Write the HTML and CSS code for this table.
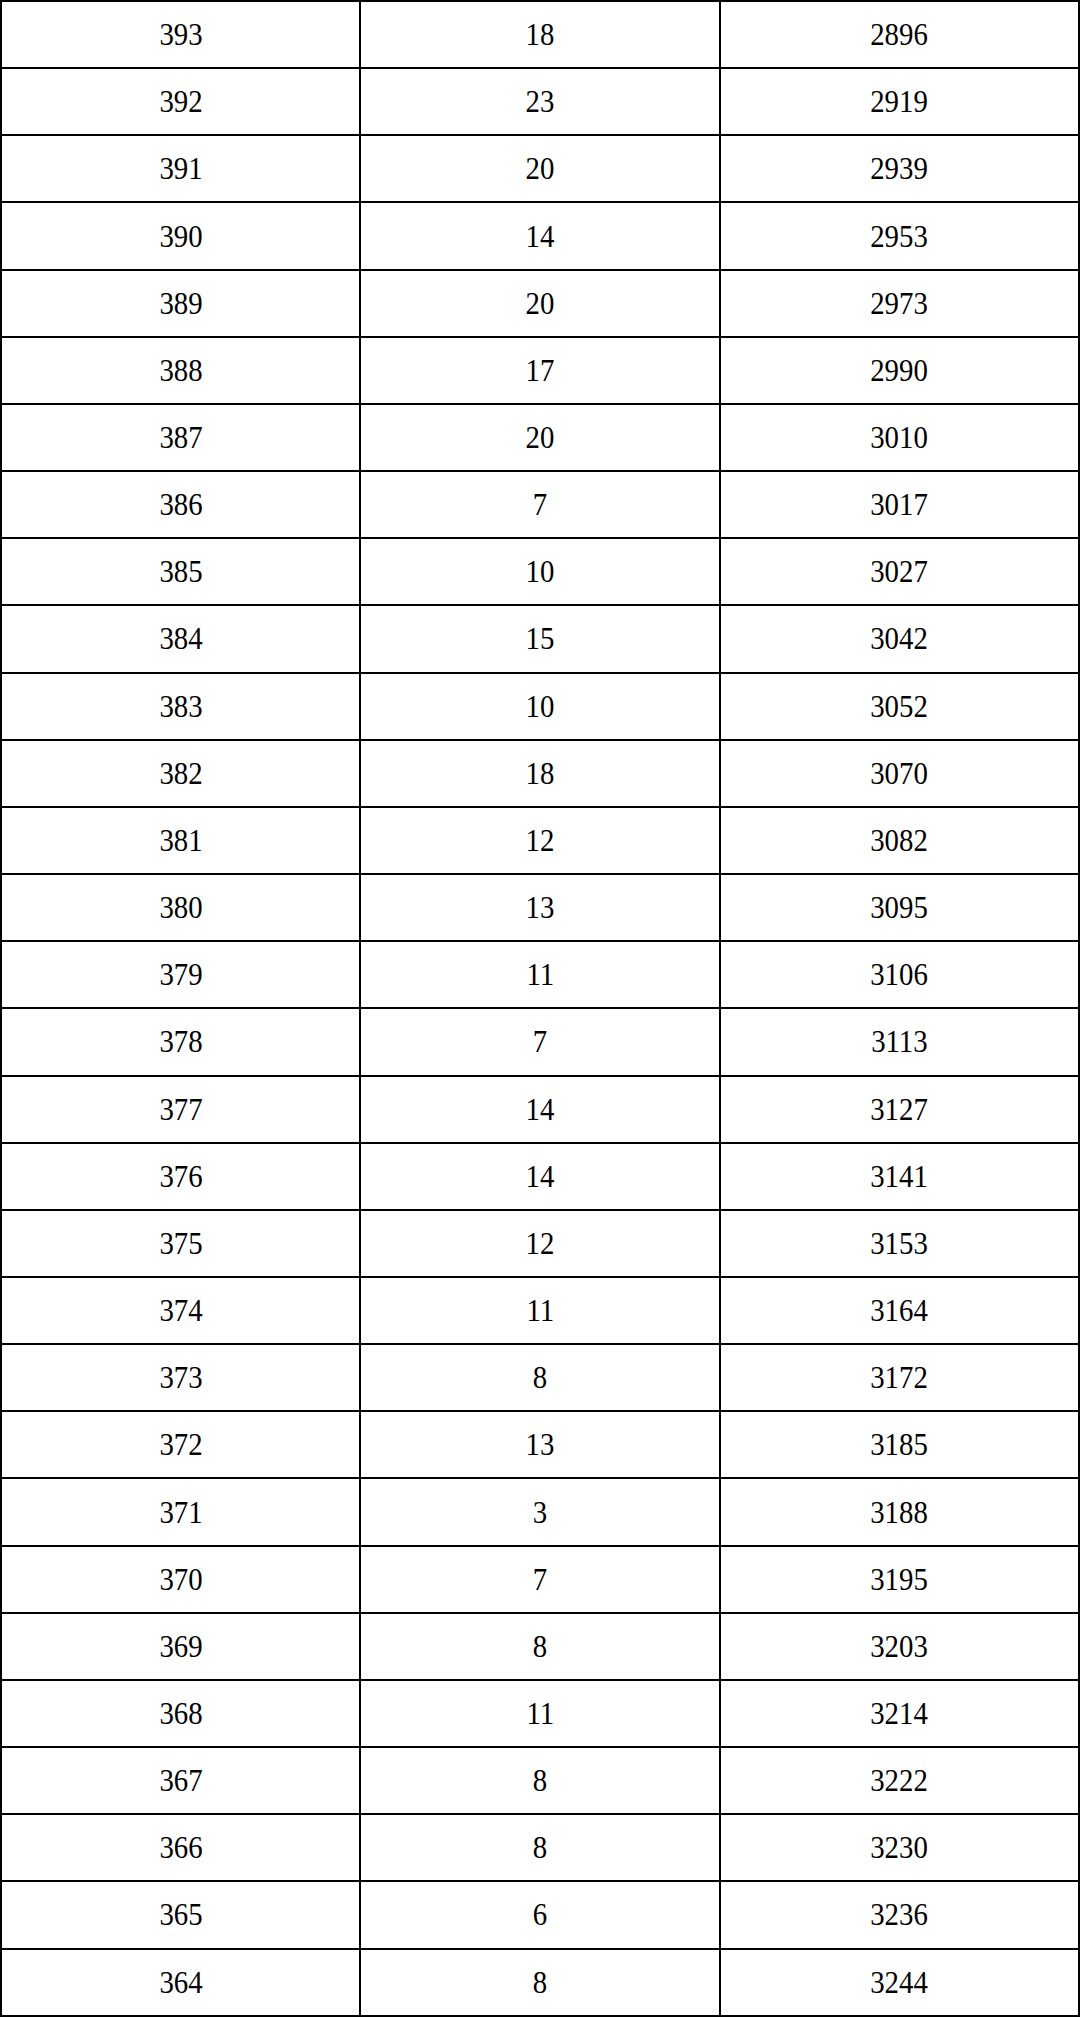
FILE: index.html
```html
<!DOCTYPE html>
<html>
<head>
<meta charset="utf-8">
<link rel="stylesheet" href="styles.css">
</head>
<body>
<table class="grid">
<tbody>
<tr><td><span>393</span></td><td><span>18</span></td><td><span>2896</span></td></tr>
<tr><td><span>392</span></td><td><span>23</span></td><td><span>2919</span></td></tr>
<tr><td><span>391</span></td><td><span>20</span></td><td><span>2939</span></td></tr>
<tr><td><span>390</span></td><td><span>14</span></td><td><span>2953</span></td></tr>
<tr><td><span>389</span></td><td><span>20</span></td><td><span>2973</span></td></tr>
<tr><td><span>388</span></td><td><span>17</span></td><td><span>2990</span></td></tr>
<tr><td><span>387</span></td><td><span>20</span></td><td><span>3010</span></td></tr>
<tr><td><span>386</span></td><td><span>7</span></td><td><span>3017</span></td></tr>
<tr><td><span>385</span></td><td><span>10</span></td><td><span>3027</span></td></tr>
<tr><td><span>384</span></td><td><span>15</span></td><td><span>3042</span></td></tr>
<tr><td><span>383</span></td><td><span>10</span></td><td><span>3052</span></td></tr>
<tr><td><span>382</span></td><td><span>18</span></td><td><span>3070</span></td></tr>
<tr><td><span>381</span></td><td><span>12</span></td><td><span>3082</span></td></tr>
<tr><td><span>380</span></td><td><span>13</span></td><td><span>3095</span></td></tr>
<tr><td><span>379</span></td><td><span>11</span></td><td><span>3106</span></td></tr>
<tr><td><span>378</span></td><td><span>7</span></td><td><span>3113</span></td></tr>
<tr><td><span>377</span></td><td><span>14</span></td><td><span>3127</span></td></tr>
<tr><td><span>376</span></td><td><span>14</span></td><td><span>3141</span></td></tr>
<tr><td><span>375</span></td><td><span>12</span></td><td><span>3153</span></td></tr>
<tr><td><span>374</span></td><td><span>11</span></td><td><span>3164</span></td></tr>
<tr><td><span>373</span></td><td><span>8</span></td><td><span>3172</span></td></tr>
<tr><td><span>372</span></td><td><span>13</span></td><td><span>3185</span></td></tr>
<tr><td><span>371</span></td><td><span>3</span></td><td><span>3188</span></td></tr>
<tr><td><span>370</span></td><td><span>7</span></td><td><span>3195</span></td></tr>
<tr><td><span>369</span></td><td><span>8</span></td><td><span>3203</span></td></tr>
<tr><td><span>368</span></td><td><span>11</span></td><td><span>3214</span></td></tr>
<tr><td><span>367</span></td><td><span>8</span></td><td><span>3222</span></td></tr>
<tr><td><span>366</span></td><td><span>8</span></td><td><span>3230</span></td></tr>
<tr><td><span>365</span></td><td><span>6</span></td><td><span>3236</span></td></tr>
<tr><td><span>364</span></td><td><span>8</span></td><td><span>3244</span></td></tr>
</tbody>
</table>
</body>
</html>
```

FILE: styles.css
```css
html, body {
  margin: 0;
  padding: 0;
  background: #fff;
}
.grid {
  width: 1080px;
  height: 2017px;
  border-collapse: collapse;
  table-layout: fixed;
  font-family: "Liberation Serif", "Times New Roman", serif;
  font-size: 32px;
  color: #000;
}
.grid td {
  border: 2px solid #000;
  text-align: center;
  vertical-align: middle;
  padding: 0;
  width: 33.333%;
}
.grid td span {
  display: inline-block;
  transform: scaleX(0.9);
}
```
